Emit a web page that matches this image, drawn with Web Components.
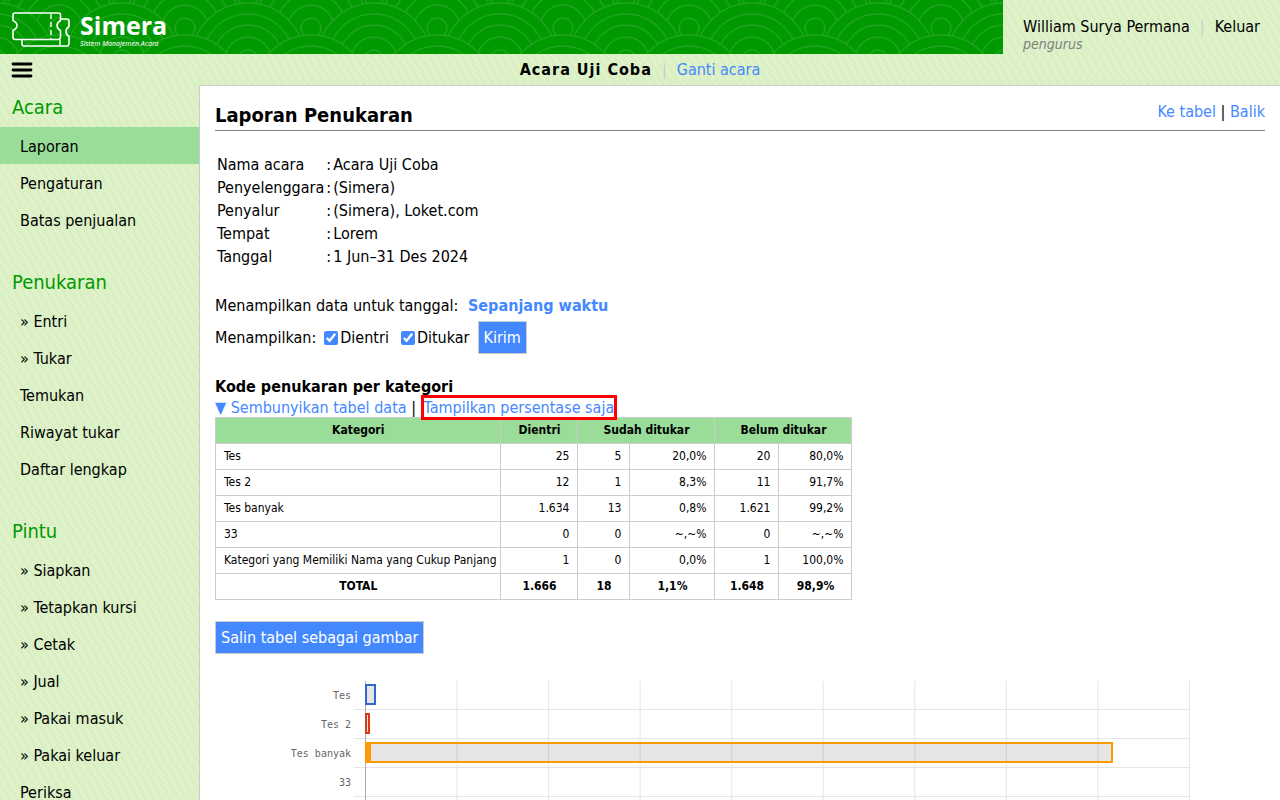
<!DOCTYPE html>
<html lang="id">
<head>
<meta charset="utf-8">
<meta name="viewport" content="width=device-width, initial-scale=1">
<title>Simera - Laporan Penukaran</title>
<style>
    html {
        --green: #090;
        --light-green: #9d9;
        --blue: #48f;
        --line: #ccc;
        font: 16px/19px "DejaVu Sans Condensed", "DejaVu Sans", sans-serif;
        color: black;
    }

    body {
        margin: 0;
    }
</style>
</head>
<body>

<template id="app-template">
    <style>
        :host {
            display: flex;
            flex-direction: column;
            height: 100vh;
            background-color: #dcf1c6;
            background-image:
                repeating-linear-gradient(40deg, rgba(255, 255, 255, 0.12) 0 1px, transparent 2px 4px),
                repeating-linear-gradient(60deg, rgba(180, 215, 150, 0.12) 0 2px, transparent 3px 7px);
        }

        .columns {
            flex: 1;
            min-height: 0;
            display: grid;
            grid-template-columns: 199px minmax(0, 1fr);
        }

        nav, main {
            overflow: hidden auto;
            scrollbar-width: none;
        }

        main {
            padding: 15px;
            background: white;
            border-top: 1px solid var(--line);
            border-left: 1px solid var(--line);
        }
    </style>
    <slot name="header"></slot>
    <div class="columns">
        <nav><slot name="menu"></slot></nav>
        <main><slot></slot></main>
    </div>
</template>

<template id="header-template">
    <style>
        :host {
            display: flex;
            height: 54px;
        }

        .banner {
            flex: 1;
            min-width: 0;
            display: grid;
            background: var(--green);
        }

        .waves, .brand {
            grid-area: 1 / 1;
        }

        .waves {
            width: 100%;
            height: 54px;
        }

        .brand {
            display: flex;
            gap: 9px;
            padding: 11px 11px 0;
            color: white;
            font-family: "Open Sans", "Noto Sans", sans-serif;
            text-decoration: none;
        }

        .name {
            display: block;
            font-size: 25px;
            font-weight: bold;
            line-height: 28px;
        }

        .tagline {
            display: block;
            font-family: "Noto Sans", sans-serif;
            font-size: 7px;
            font-style: italic;
            line-height: 10px;
        }

        .user {
            padding: 17px 20px 0;
        }

        .user a {
            color: black;
            text-decoration: none;
        }

        .separator {
            color: var(--line);
            padding: 0 10px;
        }

        .role {
            color: gray;
            font-size: 14px;
            font-style: italic;
            line-height: 16px;
        }
    </style>
    <div class="banner">
        <svg class="waves" aria-hidden="true">
            <defs>
                <g id="fan" fill="#090" stroke="#1fa41f" stroke-width="1.5">
                    <circle r="57"/>
                    <circle r="46"/>
                    <circle r="35"/>
                    <circle r="23"/>
                    <circle r="10"/>
                </g>
                <pattern id="fans" x="122" width="126" height="54" patternUnits="userSpaceOnUse">
                    <use href="#fan" x="0" y="-4"/>
                    <use href="#fan" x="126" y="-4"/>
                    <use href="#fan" x="63" y="28"/>
                    <use href="#fan" x="0" y="60"/>
                    <use href="#fan" x="126" y="60"/>
                    <use href="#fan" x="63" y="92"/>
                </pattern>
            </defs>
            <rect width="100%" height="54" fill="url(#fans)"/>
        </svg>
        <a class="brand" href="#">
            <svg width="60" height="37" viewBox="0 0 60 37" fill="none" stroke="white" stroke-width="1.6" stroke-linejoin="round" aria-hidden="true">
                <path d="M4 2H47.500Q49.500 2 49.500 4V9.500Q46 11.500 46 14.500Q46 17.500 49.500 19.500V26Q49.500 28.500 47 28.500H4.500Q2 28.500 2 26.500V19.500Q6 17.500 6 14.500Q6 11.500 2 9.500V4Q2 2 4 2Z"/>
                <path d="M50 8H56Q58 8 58 10V15.500Q55 17.500 55 20.500Q55 23.500 58 25.500V32Q58 35 56 35H13Q11 35 11 33V29"/>
                <path d="M40 3V28M49 29V34" stroke-dasharray="5 3" stroke-width="1.400"/>
            </svg>
            <span>
                <span class="name">Simera</span>
                <span class="tagline">Sistem Manajemen Acara</span>
            </span>
        </a>
    </div>
    <div class="user">
        <a href="#"><slot name="user"></slot></a><span class="separator">|</span><a href="#">Keluar</a>
        <div class="role"><slot name="role"></slot></div>
    </div>
</template>

<template id="event-template">
    <style>
        :host {
            display: grid;
            grid-template-columns: 1fr auto 1fr;
            height: 31px;
            align-items: center;
        }

        button {
            justify-self: start;
            display: flex;
            margin-left: 11px;
            padding: 0;
            border: 0;
            background: none;
        }

        b {
            letter-spacing: 1px;
        }

        a {
            color: var(--blue);
            text-decoration: none;
        }

        .separator {
            color: var(--line);
            padding: 0 10px;
        }
    </style>
    <button type="button" aria-label="Menu">
        <svg width="22" height="16" viewBox="0 0 22 16" stroke="black" stroke-width="2.800" stroke-linecap="round" aria-hidden="true">
            <path d="M2 2H20M2 8H20M2 14H20"/>
        </svg>
    </button>
    <div><b><slot></slot></b><span class="separator">|</span><a href="#">Ganti acara</a></div>
</template>

<template id="menu-group-template">
    <style>
        :host {
            display: block;
            margin-bottom: 22px;
        }

        h2 {
            margin: 0;
            padding: 10px 12px 8px;
            color: var(--green);
            font-size: 20px;
            font-weight: normal;
            line-height: 24px;
        }
    </style>
    <h2></h2>
    <slot></slot>
</template>

<template id="menu-item-template">
    <style>
        :host {
            display: block;
        }

        a {
            display: block;
            padding: 10px 20px 8px;
            color: black;
            text-decoration: none;
        }

        :host([active]) a {
            background: var(--light-green);
        }
    </style>
    <a href="#"><slot></slot></a>
</template>

<template id="page-title-template">
    <style>
        :host {
            display: flex;
            justify-content: space-between;
            border-bottom: 1px solid gray;
            margin-bottom: 21px;
        }

        h1 {
            margin: 0;
            padding: 2px 0 3px;
            font-size: 20px;
            line-height: 24px;
        }

        a {
            color: var(--blue);
            text-decoration: none;
        }

        .links {
            padding-top: 1px;
        }
    </style>
    <h1><slot></slot></h1>
    <div class="links"><a href="#tabel">Ke tabel</a> | <a href="#">Balik</a></div>
</template>

<template id="event-info-template">
    <style>
        :host {
            display: block;
            margin-bottom: 27px;
        }

        th {
            text-align: left;
            font-weight: normal;
        }

        td, th {
            padding: 1px 0;
        }
    </style>
    <table>
        <tbody></tbody>
    </table>
</template>

<template id="report-filter-template">
    <style>
        :host {
            display: block;
            margin-bottom: 22px;
        }

        a {
            margin-left: 5px;
            color: var(--blue);
            font-weight: bold;
            text-decoration: none;
        }

        form {
            display: flex;
            align-items: center;
            margin-top: 6px;
        }

        label {
            display: flex;
            align-items: center;
            gap: 2px;
            margin-left: 8px;
        }

        label + label {
            margin-left: 12px;
        }

        input {
            width: 14px;
            height: 14px;
            margin: 0;
            accent-color: var(--blue);
        }

        blue-button {
            margin-left: 8px;
        }
    </style>
    <div>Menampilkan data untuk tanggal: <a href="#">Sepanjang waktu</a></div>
    <form>
        <span>Menampilkan:</span>
        <label><input type="checkbox" checked>Dientri</label>
        <label><input type="checkbox" checked>Ditukar</label>
        <blue-button>Kirim</blue-button>
    </form>
</template>

<template id="blue-button-template">
    <style>
        :host {
            display: inline-block;
        }

        button {
            display: block;
            padding: 6px 5px;
            border: 1px solid var(--line);
            background: var(--blue);
            color: white;
            font: inherit;
        }
    </style>
    <button type="button"><slot></slot></button>
</template>

<template id="category-table-template">
    <style>
        :host {
            display: block;
            margin-bottom: 21px;
        }

        h3 {
            margin: 0;
            font-size: 16px;
            line-height: 22px;
        }

        a {
            color: var(--blue);
            text-decoration: none;
        }

        .marked {
            position: relative;
            margin-left: 3px;
            outline: 3px solid red;
        }

        table {
            border-collapse: collapse;
            font-size: 12px;
            line-height: 15px;
        }

        th, td {
            padding: 5px 8px;
            border: 1px solid var(--line);
            text-align: right;
        }

        th {
            text-align: center;
        }

        thead th {
            background: var(--light-green);
        }

        tbody th {
            padding-right: 4px;
            font-weight: normal;
            text-align: left;
            white-space: nowrap;
        }
    </style>
    <h3>Kode penukaran per kategori</h3>
    <div><a href="#">▼ Sembunyikan tabel data</a> | <a class="marked" href="#">Tampilkan persentase saja</a></div>
    <table id="tabel">
        <colgroup>
            <col style="width: 283px">
            <col style="width: 77px">
            <col style="width: 52px">
            <col style="width: 85px">
            <col style="width: 64px">
            <col style="width: 73px">
        </colgroup>
        <thead>
            <tr><th>Kategori</th><th>Dientri</th><th colspan="2">Sudah ditukar</th><th colspan="2">Belum ditukar</th></tr>
        </thead>
        <tbody></tbody>
        <tfoot>
            <tr><th>TOTAL</th><th>1.666</th><th>18</th><th>1,1%</th><th>1.648</th><th>98,9%</th></tr>
        </tfoot>
    </table>
</template>

<template id="category-chart-template">
    <style>
        :host {
            display: block;
            margin-top: 27px;
            padding-right: 75px;
            color: #666;
            font: 10px/12px "DejaVu Sans Mono", monospace;
        }

        .row {
            display: grid;
            grid-template-columns: 136px 14px minmax(0, 1fr);
            height: 29px;
            align-items: center;
            background: linear-gradient(#e5e5e5, #e5e5e5) 139px bottom / 100% 1px no-repeat;
        }

        .label {
            text-align: right;
        }

        .plot {
            grid-column: 3;
            display: flex;
            align-items: center;
            height: 29px;
            border-left: 1px solid #aaa;
            background: linear-gradient(to left, #e5e5e5 1px, transparent 1px) 0 0 / calc(100% / 9) 100%;
        }

        .bar {
            box-sizing: border-box;
            height: 21px;
            margin: -2px 0 0 -1px;
            border: 2px solid var(--color);
            background: rgba(0, 0, 0, 0.1);
        }

        .done {
            height: 100%;
            margin-left: -2px;
            background: var(--color);
        }
    </style>
</template>

<simera-app>
    <div slot="header">
        <simera-header>
            <span slot="user">William Surya Permana</span>
            <span slot="role">pengurus</span>
        </simera-header>
        <event-bar>Acara Uji Coba</event-bar>
    </div>

    <menu-group slot="menu" label="Acara">
        <menu-item active>Laporan</menu-item>
        <menu-item>Pengaturan</menu-item>
        <menu-item>Batas penjualan</menu-item>
    </menu-group>
    <menu-group slot="menu" label="Penukaran">
        <menu-item>» Entri</menu-item>
        <menu-item>» Tukar</menu-item>
        <menu-item>Temukan</menu-item>
        <menu-item>Riwayat tukar</menu-item>
        <menu-item>Daftar lengkap</menu-item>
    </menu-group>
    <menu-group slot="menu" label="Pintu">
        <menu-item>» Siapkan</menu-item>
        <menu-item>» Tetapkan kursi</menu-item>
        <menu-item>» Cetak</menu-item>
        <menu-item>» Jual</menu-item>
        <menu-item>» Pakai masuk</menu-item>
        <menu-item>» Pakai keluar</menu-item>
        <menu-item>Periksa</menu-item>
    </menu-group>

    <page-title>Laporan Penukaran</page-title>
    <event-info></event-info>
    <report-filter></report-filter>
    <category-table></category-table>
    <blue-button>Salin tabel sebagai gambar</blue-button>
    <category-chart></category-chart>
</simera-app>

<script>
    const INFO = [
        ['Nama acara', 'Acara Uji Coba'],
        ['Penyelenggara', '(Simera)'],
        ['Penyalur', '(Simera), Loket.com'],
        ['Tempat', 'Lorem'],
        ['Tanggal', '1 Jun–31 Des 2024'],
    ];

    const CATEGORIES = [
        ['Tes', '25', '5', '20,0%', '20', '80,0%'],
        ['Tes 2', '12', '1', '8,3%', '11', '91,7%'],
        ['Tes banyak', '1.634', '13', '0,8%', '1.621', '99,2%'],
        ['33', '0', '0', '~,~%', '0', '~,~%'],
        ['Kategori yang Memiliki Nama yang Cukup Panjang', '1', '0', '0,0%', '1', '100,0%'],
    ];

    const COLORS = ['#36c', '#dc3912', '#f90', '#109618', '#909'];
    const CHART_MAX = 1800;

    class TemplateElement extends HTMLElement {
        constructor() {
            super();
            const template = document.getElementById(this.constructor.template);
            this.attachShadow({ mode: 'open' }).appendChild(template.content.cloneNode(true));
        }

        $(selector) {
            return this.shadowRoot.querySelector(selector);
        }
    }

    class SimeraApp extends TemplateElement {
        static template = 'app-template';
    }

    class SimeraHeader extends TemplateElement {
        static template = 'header-template';
    }

    class EventBar extends TemplateElement {
        static template = 'event-template';
    }

    class MenuGroup extends TemplateElement {
        static template = 'menu-group-template';

        connectedCallback() {
            this.$('h2').textContent = this.getAttribute('label');
        }
    }

    class MenuItem extends TemplateElement {
        static template = 'menu-item-template';
    }

    class PageTitle extends TemplateElement {
        static template = 'page-title-template';
    }

    class BlueButton extends TemplateElement {
        static template = 'blue-button-template';
    }

    class ReportFilter extends TemplateElement {
        static template = 'report-filter-template';
    }

    class EventInfo extends TemplateElement {
        static template = 'event-info-template';

        connectedCallback() {
            this.$('tbody').innerHTML = INFO
                .map(([name, value]) => `<tr><th>${name}</th><td>:</td><td>${value}</td></tr>`)
                .join('');
        }
    }

    class CategoryTable extends TemplateElement {
        static template = 'category-table-template';

        connectedCallback() {
            this.$('tbody').innerHTML = CATEGORIES
                .map(([name, ...cells]) => `<tr><th>${name}</th>${cells.map(cell => `<td>${cell}</td>`).join('')}</tr>`)
                .join('');
        }
    }

    class CategoryChart extends TemplateElement {
        static template = 'category-chart-template';

        connectedCallback() {
            // the long category names are left off the axis
            CATEGORIES.forEach(([name, entered, exchanged], i) => {
                const total = Number(entered.replace('.', ''));
                const row = document.createElement('div');
                row.className = 'row';
                row.innerHTML = `<span class="label">${name.length > 20 ? '' : name}</span><div class="plot"></div>`;
                if (total > 0) {
                    const done = Number(exchanged) / total * 100;
                    row.lastChild.innerHTML = `
                        <div class="bar" style="--color: ${COLORS[i]}; width: ${total / CHART_MAX * 100}%">
                            <div class="done" style="width: ${total > 100 ? done : 0}%"></div>
                        </div>`;
                }
                this.shadowRoot.appendChild(row);
            });
        }
    }

    customElements.define('simera-app', SimeraApp);
    customElements.define('simera-header', SimeraHeader);
    customElements.define('event-bar', EventBar);
    customElements.define('menu-group', MenuGroup);
    customElements.define('menu-item', MenuItem);
    customElements.define('page-title', PageTitle);
    customElements.define('blue-button', BlueButton);
    customElements.define('report-filter', ReportFilter);
    customElements.define('event-info', EventInfo);
    customElements.define('category-table', CategoryTable);
    customElements.define('category-chart', CategoryChart);
</script>
</body>
</html>
